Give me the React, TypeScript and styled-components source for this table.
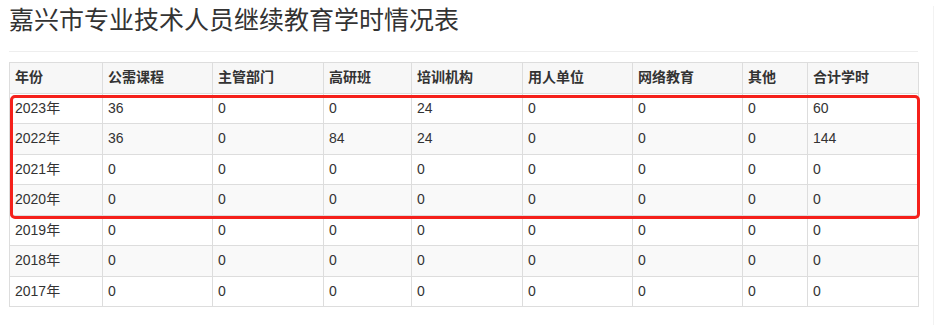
import React from "react";
import styled, { createGlobalStyle } from "styled-components";

const GlobalStyle = createGlobalStyle`
  body {
    margin: 0;
    background: #fff;
    color: #333;
    font-family: "Liberation Sans", "Noto Sans CJK SC", Arial, sans-serif;
  }
`;

const Page = styled.div`
  box-sizing: border-box;
  width: 934px;
  min-height: 325px;
  padding-left: 9px;
  border-right: 1px solid #f2f2f2;
`;

const Title = styled.h3`
  margin: 6px 0 0;
  font-size: 25px;
  font-weight: 400;
  line-height: 28px;
  color: #333;
`;

const Divider = styled.hr`
  width: 909px;
  margin: 17px 0 10px;
  border: 0;
  border-top: 1px solid #eee;
`;

const TableWrap = styled.div`
  position: relative;
  width: 909px;
`;

const Table = styled.table`
  width: 909px;
  border-collapse: collapse;
  table-layout: fixed;
  font-size: 14px;

  tbody tr:nth-child(even) {
    background: #f9f9f9;
  }
`;

const HeadRow = styled.tr`
  background: #f7f7f7;
`;

const Th = styled.th`
  border: 1px solid #ddd;
  padding: 5px;
  line-height: 19.5px;
  text-align: left;
  font-weight: 700;
  color: #333;
`;

const Td = styled.td`
  border: 1px solid #ddd;
  padding: 5px;
  line-height: 19.5px;
  text-align: left;
  color: #333;
`;

const Highlight = styled.div`
  position: absolute;
  left: 1px;
  top: 33px;
  width: 910px;
  height: 124px;
  box-sizing: border-box;
  border: 3px solid #f5201b;
  border-radius: 5px;
  pointer-events: none;
`;

const columns = [
  { label: "年份", width: 93 },
  { label: "公需课程", width: 110 },
  { label: "主管部门", width: 111 },
  { label: "高研班", width: 88 },
  { label: "培训机构", width: 111 },
  { label: "用人单位", width: 110 },
  { label: "网络教育", width: 110 },
  { label: "其他", width: 65 },
  { label: "合计学时", width: 111 },
];

const rows = [
  ["2023年", 36, 0, 0, 24, 0, 0, 0, 60],
  ["2022年", 36, 0, 84, 24, 0, 0, 0, 144],
  ["2021年", 0, 0, 0, 0, 0, 0, 0, 0],
  ["2020年", 0, 0, 0, 0, 0, 0, 0, 0],
  ["2019年", 0, 0, 0, 0, 0, 0, 0, 0],
  ["2018年", 0, 0, 0, 0, 0, 0, 0, 0],
  ["2017年", 0, 0, 0, 0, 0, 0, 0, 0],
];

const App = () => {
  return (
    <Page>
      <GlobalStyle />
      <Title>嘉兴市专业技术人员继续教育学时情况表</Title>
      <Divider />
      <TableWrap>
        <Table>
          <colgroup>
            {columns.map((c) => (
              <col key={c.label} style={{ width: c.width }} />
            ))}
          </colgroup>
          <thead>
            <HeadRow>
              {columns.map((c) => (
                <Th key={c.label}>{c.label}</Th>
              ))}
            </HeadRow>
          </thead>
          <tbody>
            {rows.map((row) => (
              <tr key={row[0]}>
                {row.map((cell, i) => (
                  <Td key={i}>{cell}</Td>
                ))}
              </tr>
            ))}
          </tbody>
        </Table>
        <Highlight />
      </TableWrap>
    </Page>
  );
};

export default App;
